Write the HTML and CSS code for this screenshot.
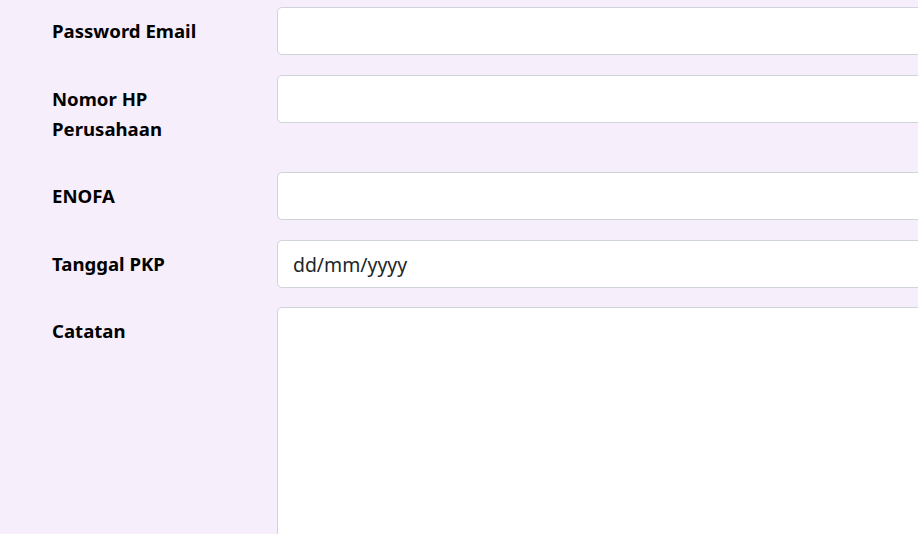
FILE: index.html
```html
<!DOCTYPE html>
<html lang="id">
<head>
<meta charset="utf-8">
<title>Form</title>
<link rel="stylesheet" href="styles.css">
</head>
<body>
<form class="form">
  <div class="row">
    <label class="label" for="pw">Password Email</label>
    <div class="field"><input class="control" id="pw" type="text"></div>
  </div>
  <div class="row">
    <label class="label" for="hp">Nomor HP Perusahaan</label>
    <div class="field"><input class="control" id="hp" type="text"></div>
  </div>
  <div class="row">
    <label class="label" for="enofa">ENOFA</label>
    <div class="field"><input class="control" id="enofa" type="text"></div>
  </div>
  <div class="row row-tight">
    <label class="label" for="tgl">Tanggal PKP</label>
    <div class="field"><input class="control date" id="tgl" type="text" placeholder="dd/mm/yyyy"></div>
  </div>
  <div class="row">
    <label class="label" for="cat">Catatan</label>
    <div class="field"><textarea class="control area" id="cat"></textarea></div>
  </div>
</form>
</body>
</html>
```
FILE: styles.css
```css
html, body {
  margin: 0;
  padding: 0;
  background: #f6eefa;
  overflow: hidden;
}
body {
  font-family: "Noto Sans", "Open Sans", sans-serif;
  color: #000;
}
.form {
  width: 1200px;
  padding: 7px 0 0 52px;
  box-sizing: border-box;
}
.row {
  display: flex;
  align-items: flex-start;
  margin-bottom: 20px;
}
.row-tight {
  margin-bottom: 19px;
}
.label {
  width: 225px;
  flex: none;
  box-sizing: border-box;
  padding: 9px 40px 8px 0;
  font-size: 18.6px;
  font-weight: 700;
  line-height: 30px;
}
.field {
  flex: 1;
}
.control {
  display: block;
  width: 100%;
  box-sizing: border-box;
  height: 48px;
  padding: 8px 15px;
  font-family: inherit;
  font-size: 19.4px;
  line-height: 30px;
  color: #212529;
  background: #fff;
  border: 1px solid #ced4da;
  border-radius: 5px;
  outline: none;
}
.date::placeholder {
  color: #212529;
  opacity: 1;
}
.area {
  height: 300px;
  resize: none;
}
```
